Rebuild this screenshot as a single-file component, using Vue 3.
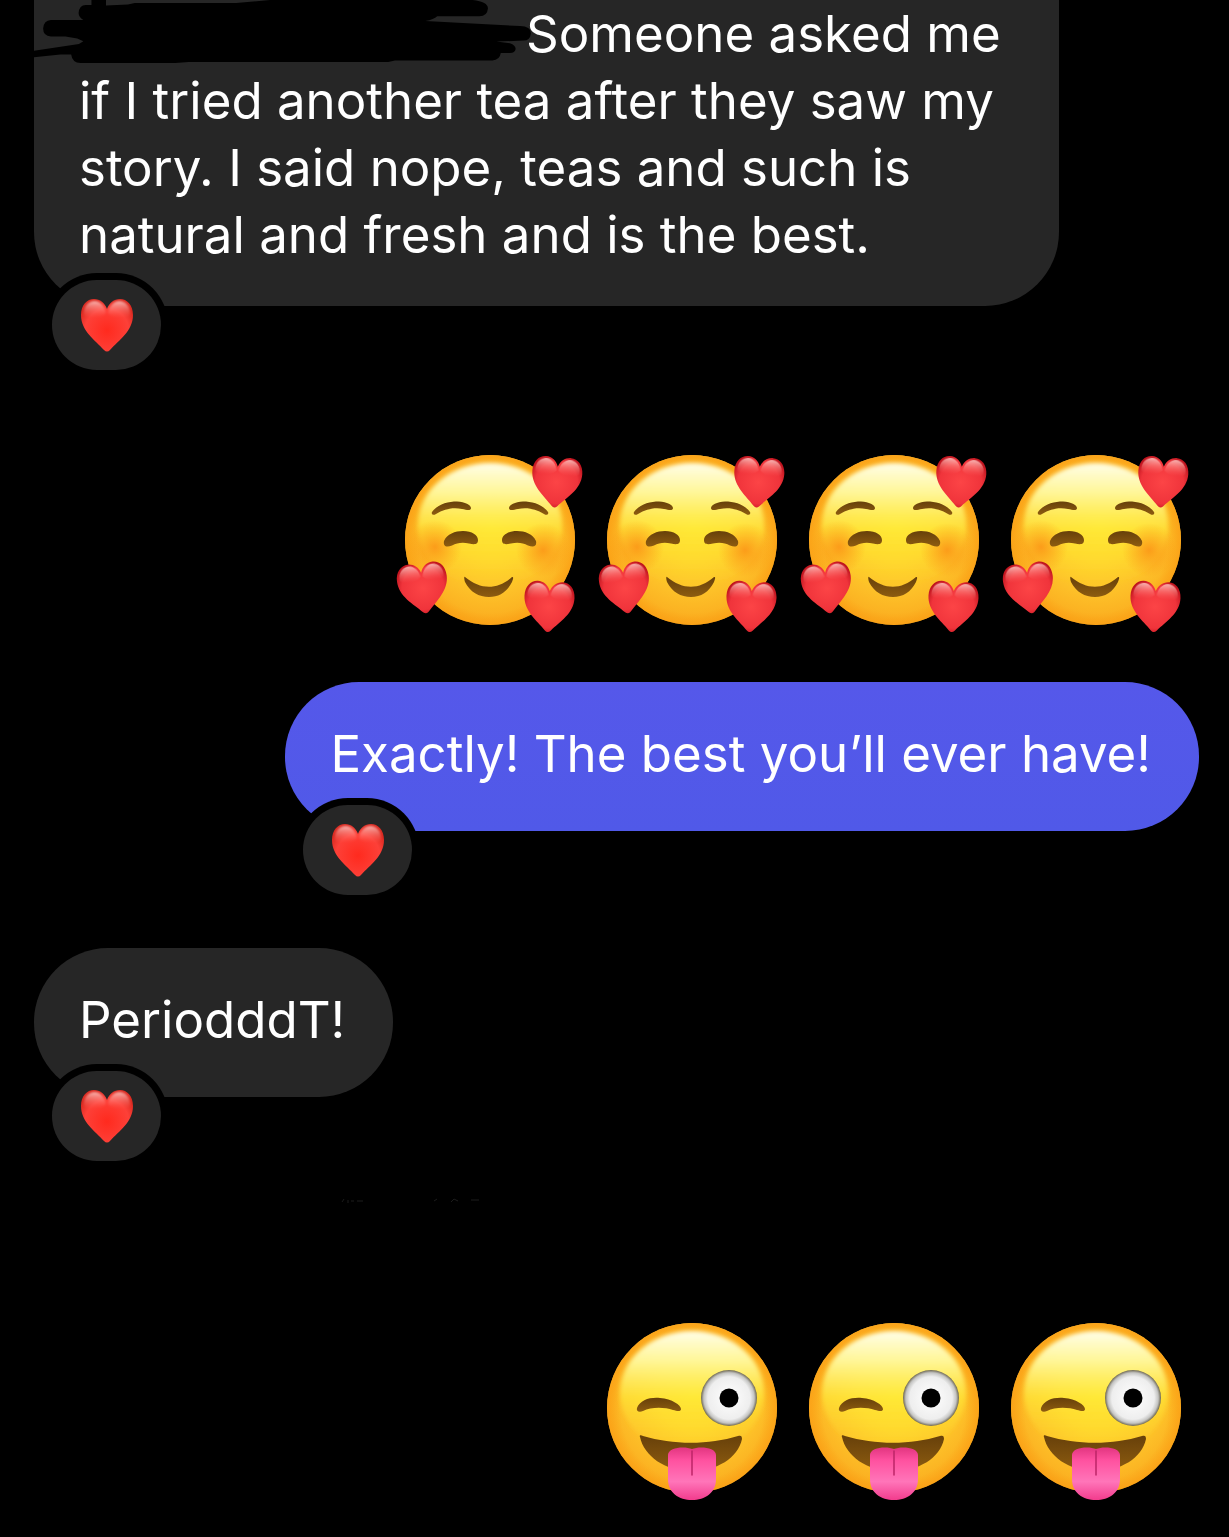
<script setup>
const messages = [
  {
    id: 1,
    side: 'in',
    redacted: true,
    text: 'Someone asked me if I tried another tea after they saw my story. I said nope, teas and such is natural and fresh and is the best.',
    liked: true,
  },
  { id: 2, side: 'out', sticker: 'loved', count: 4 },
  { id: 3, side: 'out', text: 'Exactly! The best you’ll ever have!', liked: true },
  { id: 4, side: 'in', text: 'PeriodddT!', liked: true },
  { id: 5, side: 'out', sticker: 'zany', count: 3, residue: true },
]
</script>

<template>
  <svg class="defs" aria-hidden="true">
    <defs>
      <radialGradient id="face" gradientUnits="userSpaceOnUse" cx="97" cy="80" r="108">
        <stop offset="0" stop-color="#ffe32e" />
        <stop offset="0.35" stop-color="#ffd52c" />
        <stop offset="0.65" stop-color="#fdbf28" />
        <stop offset="0.85" stop-color="#fbb021" />
        <stop offset="1" stop-color="#f49c14" />
      </radialGradient>
      <radialGradient id="rim" gradientUnits="userSpaceOnUse" cx="95" cy="97" r="87">
        <stop offset="0.82" stop-color="#fba015" stop-opacity="0" />
        <stop offset="0.95" stop-color="#fba015" stop-opacity="0.7" />
        <stop offset="1" stop-color="#fba41c" />
      </radialGradient>
      <linearGradient id="shine" x1="0" y1="0" x2="0" y2="1">
        <stop offset="0" stop-color="#fffee8" />
        <stop offset="0.25" stop-color="#fff89a" stop-opacity="0.95" />
        <stop offset="0.55" stop-color="#ffec3a" stop-opacity="0.6" />
        <stop offset="1" stop-color="#ffd82e" stop-opacity="0" />
      </linearGradient>
      <filter id="soft" x="-10%" y="-10%" width="120%" height="120%">
        <feGaussianBlur stdDeviation="2" />
      </filter>
      <filter id="glossBlur" x="-10%" y="-10%" width="120%" height="120%">
        <feGaussianBlur stdDeviation="0.800" />
      </filter>
      <radialGradient id="blush">
        <stop offset="0" stop-color="#fb8511" stop-opacity="0.7" />
        <stop offset="1" stop-color="#fb8c11" stop-opacity="0" />
      </radialGradient>
      <linearGradient id="brown" x1="0" y1="0" x2="0" y2="1">
        <stop offset="0" stop-color="#67400a" />
        <stop offset="1" stop-color="#8d5c10" />
      </linearGradient>
      <radialGradient id="smallHeart" cx="0.5" cy="0.5" r="0.6">
        <stop offset="0" stop-color="#fc4446" />
        <stop offset="0.7" stop-color="#f0343b" />
        <stop offset="1" stop-color="#b80f1a" />
      </radialGradient>
      <radialGradient id="bigHeart" cx="0.5" cy="0.6" r="0.6">
        <stop offset="0" stop-color="#ff2a1e" />
        <stop offset="0.7" stop-color="#fd4038" />
        <stop offset="1" stop-color="#d9281f" />
      </radialGradient>
      <linearGradient id="gloss" x1="0" y1="0" x2="0" y2="1">
        <stop offset="0" stop-color="#ffd0cc" stop-opacity="0.85" />
        <stop offset="1" stop-color="#ff6a62" stop-opacity="0" />
      </linearGradient>
      <radialGradient id="eyeball">
        <stop offset="0" stop-color="#ffffff" />
        <stop offset="0.76" stop-color="#eeeeee" />
        <stop offset="0.9" stop-color="#c4c4c2" />
        <stop offset="1" stop-color="#6c6550" />
      </radialGradient>
      <linearGradient id="tongue" x1="0" y1="0" x2="0" y2="1">
        <stop offset="0" stop-color="#e23580" />
        <stop offset="0.25" stop-color="#ff52a0" />
        <stop offset="0.65" stop-color="#ff75b9" />
        <stop offset="1" stop-color="#f23c8d" />
      </linearGradient>
    </defs>

    <symbol id="heart" viewBox="-27 -27 54 54" overflow="visible">
      <path d="M0 26.500Q-1.500 26.500-3 25C-12 15-26 6-26-10C-26-20-20-26-13-26C-7-26-2-22 0-16C2-22 7-26 13-26C20-26 26-20 26-10C26 6 12 15 3 25Q1.500 26.500 0 26.500Z" />
      <path fill="url(#gloss)" filter="url(#glossBlur)" d="M-23-10C-24-19-18-24-12.500-24C-6-24-2-18-1-12C-6-6-20-6-23-10ZM23-10C24-19 18-24 12.500-24C6-24 2-18 1-12C6-6 20-6 23-10Z" />
    </symbol>

    <symbol id="head" viewBox="0 0 190 190">
      <circle cx="95" cy="95" r="85" fill="url(#face)" />
      <circle cx="95" cy="95" r="85" fill="url(#rim)" />
      <ellipse cx="95" cy="80" rx="72" ry="62" fill="url(#shine)" filter="url(#soft)" />
    </symbol>

    <symbol id="loved" viewBox="0 0 190 190">
      <use href="#head" width="190" height="190" />
      <circle cx="40" cy="102" r="27" fill="url(#blush)" />
      <circle cx="148" cy="105" r="27" fill="url(#blush)" />
      <g id="sideFeatures" fill="url(#brown)">
        <path d="M37 67C43 59 53 56.500 62 56.500C70 57 76 60 76 63C76 66 72 65 67 64C58 62 49 64 41 69C38 71 36 69 37 67Z" />
        <path d="M49 96C52 89 60 86 68 86C77 86 83 90 83 95C83 100 79 99.500 74 98.500C67 97 62 98 57 100.500C51 103 48 101 49 96Z" />
      </g>
      <use href="#sideFeatures" transform="translate(190 0) scale(-1 1)" />
      <path fill="url(#brown)" d="M70 132C86 145 102 145 117 132C119 132 118 134 117 137C112 147 104 152 94 152C84 152 75 147 70 137C69 134 69 131 70 132Z" />
      <g fill="url(#smallHeart)">
        <use href="#heart" x="-26" y="-26" width="52" height="52" transform="translate(161.500 37) rotate(5)" />
        <use href="#heart" x="-26" y="-26" width="52" height="52" transform="translate(28 143) rotate(-7)" />
        <use href="#heart" x="-26" y="-26" width="52" height="52" transform="translate(154 161.500) rotate(3)" />
      </g>
    </symbol>

    <symbol id="zany" viewBox="0 0 190 190">
      <use href="#head" width="190" height="190" />
      <path fill="url(#brown)" d="M40 95C43 87 53 84 63 85C75 86 84 92 84 96C84 99 80 98 76 97C67 94 54 94 46 98C42 100 39 98 40 95Z" />
      <circle cx="132" cy="85" r="28" fill="url(#eyeball)" />
      <circle cx="132" cy="85" r="9.500" fill="#000" />
      <path fill="url(#brown)" d="M43 124C42 122 44 122 46 123C76 132 112 132 141 123C144 122 145 123 145 126C141 145 120 158 94 158C68 158 47 143 43 124Z" />
      <path fill="url(#tongue)" d="M71 142C71 134 88 133 95 136C102 133 119 134 119 142L119 166C119 180 108 187 95 187C82 187 71 180 71 166Z" />
      <path fill="none" stroke="#bd2467" stroke-width="1.500" stroke-linecap="round" d="M95 138V162" />
    </symbol>
  </svg>

  <main class="thread">
    <article v-for="m in messages" :key="m.id" class="message" :class="[m.side, { sticker: m.sticker }]">
      <svg v-if="m.residue" class="residue" viewBox="0 0 142 5" aria-hidden="true">
        <path d="M3 4l2-3M9 2v3M12 3h3M18 3h6M95 3l3-2M112 4l3-3 4 2M132 2h8" />
      </svg>
      <div v-if="m.sticker" class="emojis">
        <svg v-for="n in m.count" :key="n" class="emoji" role="img" :aria-label="m.sticker">
          <use :href="'#' + m.sticker" />
        </svg>
      </div>
      <template v-else>
        <p class="bubble" :class="{ clipped: m.redacted }">
          <svg v-if="m.redacted" class="scribble" viewBox="42 0 1500 201" aria-hidden="true">
            <path d="M212 0H255V16L320 13L340 9H640L740 0H1340Q1385 5 1385 25Q1383 48 1360 48H1235Q1225 58 1200 62L1380 72L1480 77Q1512 78 1512 98Q1510 120 1490 120L1410 123L1450 128Q1467 134 1467 145Q1465 157 1450 157H1423Q1420 178 1398 179H1110L1090 183H500L460 186H180Q155 186 152 161H120L42 169V150L175 130L188 122L170 114L135 108H92Q69 106 69 84Q71 60 92 59H188Q174 50 174 38Q176 16 195 15H212Z" />
          </svg>
          <span v-if="m.redacted" class="blank"></span>{{ m.text }}
        </p>
        <button v-if="m.liked" class="reaction" type="button" aria-label="Heart reaction">
          <svg class="heart" fill="url(#bigHeart)"><use href="#heart" /></svg>
        </button>
      </template>
    </article>
  </main>
</template>

<style>
body {
  margin: 0;
  background: #000;
}
</style>

<style scoped>
.defs {
  position: absolute;
  width: 0;
  height: 0;
}

.thread {
  box-sizing: border-box;
  display: flex;
  flex-direction: column;
  min-height: 100vh;
  padding: 0 30px 34px 34px;
  background: #000;
  color: #fff;
  font-family: Inter, 'Liberation Sans', sans-serif;
  font-size: 51px;
  line-height: 67px;
}

.message {
  display: flex;
  flex-direction: column;
  align-items: flex-start;
  align-self: flex-start;
  margin-bottom: 53px;
}

.message.out {
  align-self: flex-end;
}

.message.in:first-child {
  max-width: 88%;
  margin-bottom: 75px;
}

.message.sticker {
  margin-bottom: 47px;
}

.message.sticker:last-child {
  margin-bottom: 0;
}

.bubble {
  position: relative;
  margin: 0;
  padding: 38px 48px 44px 45px;
  border-radius: 74px;
  background: #262626;
}

.out .bubble {
  background: linear-gradient(#5558ea, #5059e8);
}

.bubble.clipped {
  padding-top: 0;
  padding-bottom: 38px;
  border-radius: 0 0 74px 74px;
}

.scribble {
  position: absolute;
  top: 0;
  left: 0;
  width: 507px;
  height: 68px;
  fill: #000;
}

.blank {
  display: inline-block;
  width: 447px;
}

.reaction {
  position: relative;
  display: flex;
  align-items: center;
  justify-content: center;
  width: 109px;
  height: 90px;
  margin: -26px 0 0 18px;
  padding: 0;
  border: 0;
  border-radius: 45px;
  background: #262626;
  box-shadow: 0 0 0 7px #000;
}

.heart {
  width: 54px;
  height: 54px;
}

.emojis {
  display: flex;
  gap: 12px;
  padding-right: 8px;
}

.emoji {
  width: 190px;
  height: 190px;
}

.residue {
  width: 142px;
  height: 5px;
  margin: -16px 0 110px -258px;
  fill: none;
  stroke: #1c1c1c;
}
</style>
